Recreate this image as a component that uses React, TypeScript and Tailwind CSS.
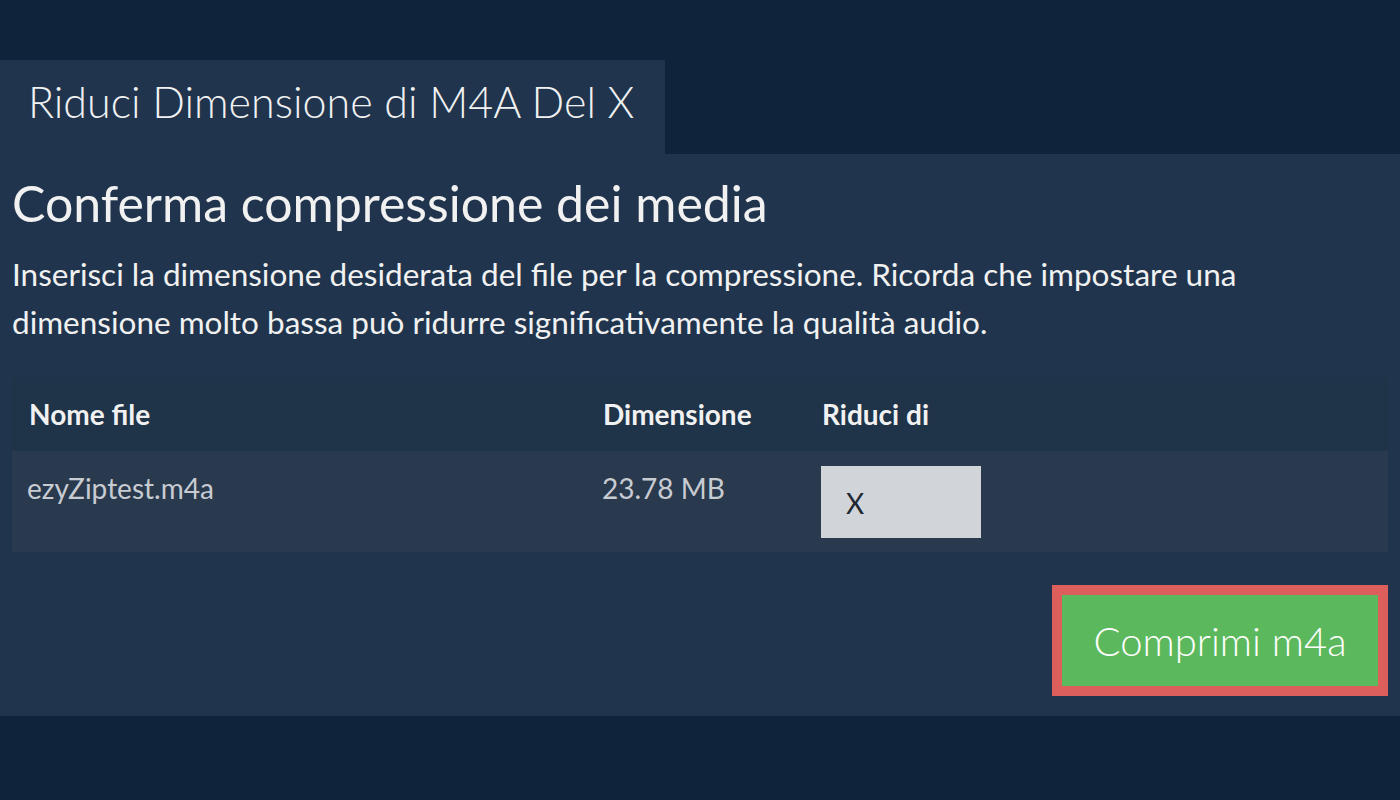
const FONT = "font-['Lato','Liberation_Sans',sans-serif]"

const ROWS = [{ name: 'ezyZiptest.m4a', size: '23.78 MB', value: 'X' }]

export default function App() {
  return (
    <div className={`min-h-[800px] w-[1400px] bg-[#0f233a] pt-[60px] ${FONT}`}>
      {/* Tab */}
      <div className="flex">
        <div className="h-[94px] w-[665px] bg-[#20354d] pl-[28px] pt-[14px]">
          <h1 className="text-[43px] font-light leading-[56px] text-[#f1f1f1]">
            Riduci Dimensione di M4A Del X
          </h1>
        </div>
      </div>

      {/* Panel */}
      <div className="bg-[#20354d] px-[12px] pt-[21px] pb-[20px]">
        <h2 className="text-[50px] font-normal leading-[56px] text-[#f1f1f1]">
          Conferma compressione dei media
        </h2>
        <p className="mt-[19px] text-[31.5px] leading-[48px] text-[#f1f1f1]">
          Inserisci la dimensione desiderata del file per la compressione. Ricorda che impostare una
          dimensione molto bassa può ridurre significativamente la qualità audio.
        </p>

        <div className="mt-[31px]">
          <div className="grid h-[74px] grid-cols-[574px_219px_1fr] items-center bg-[#1f3349] px-[17px] text-[28px] font-bold text-[#f1f1f1]">
            <div>Nome file</div>
            <div>Dimensione</div>
            <div>Riduci di</div>
          </div>
          {ROWS.map((r) => (
            <div
              key={r.name}
              className="grid h-[101px] grid-cols-[574px_219px_1fr] items-start bg-[#2a3a4e] px-[17px] pt-[15px] text-[28px] text-[#c8ccd2]"
            >
              <div className="-ml-[2px] leading-[44px]">{r.name}</div>
              <div className="-ml-[1px] leading-[44px]">{r.size}</div>
              <div className="-ml-[1px]">
                <div className="flex h-[72px] w-[160px] items-center bg-[#d1d5da] pl-[25px] pt-[2px] text-[28px] text-[#1f2933]">
                  {r.value}
                </div>
              </div>
            </div>
          ))}
        </div>

        <div className="mt-[33px] flex justify-end">
          <button className="h-[111px] w-[336px] border-[10px] border-[#dc5f5c] bg-[#5cb85c] text-[40px] font-light text-white">
            Comprimi m4a
          </button>
        </div>
      </div>
    </div>
  )
}
